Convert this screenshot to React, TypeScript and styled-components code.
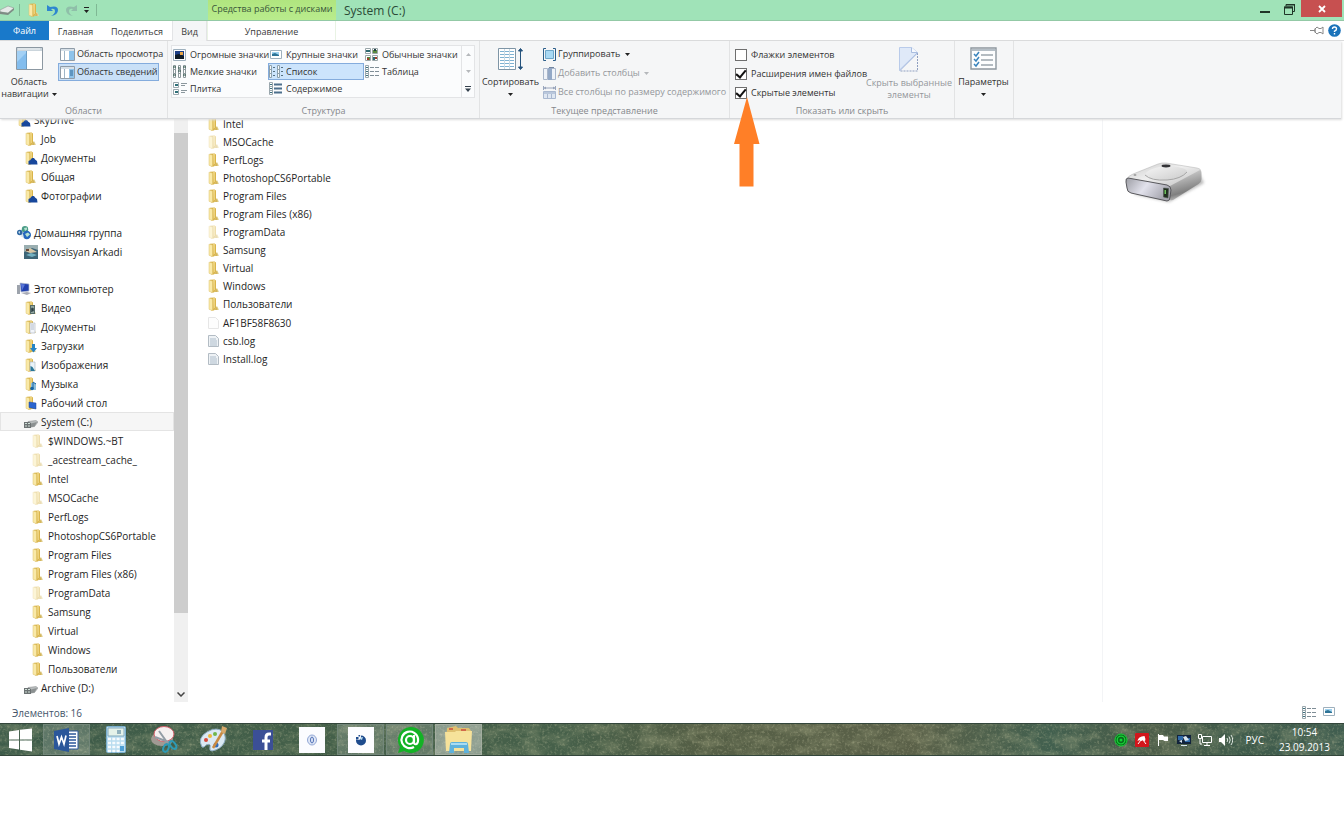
import { ReactNode, useState } from "react";
import styled, { createGlobalStyle, css } from "styled-components";

const GlobalStyle = createGlobalStyle`
  * {
    box-sizing: border-box;
  }
  body {
    margin: 0;
    background: #ffffff;
    color: #1e1e1e;
    font-family: "Open Sans", "Noto Sans", sans-serif;
    font-size: 10px;
    line-height: 12px;
  }
  button, input {
    font: inherit;
    color: inherit;
    margin: 0;
  }
  button {
    padding: 0;
    border: 0;
    background: none;
    white-space: nowrap;
  }
  svg {
    display: block;
    flex: none;
  }
`;

const Screen = styled.div`
  display: flex;
  flex-direction: column;
  height: calc(100vh - 83px);
  min-height: 400px;
`;

/* Title bar */

const TitleBar = styled.header`
  display: flex;
  height: 21px;
  background: #a0e3b8;
  border-bottom: 1px solid #93c9a6;
`;

const QuickAccess = styled.div`
  display: flex;
  align-items: center;
  width: 208px;
  height: 20px;
`;

const QuickButton = styled.button<{ $narrow?: boolean }>`
  display: flex;
  justify-content: center;
  width: ${({ $narrow }) => ($narrow ? "11px" : "19px")};
`;

const QuickLine = styled.span`
  width: 1px;
  height: 12px;
  margin: 0 4px;
  background: #7fb894;
`;

const ToolsLabel = styled.div`
  width: 128px;
  padding-top: 3px;
  background: linear-gradient(#b0e57f, #b9ec8d);
  color: #39573a;
  font-size: 9px;
  text-align: center;
  white-space: nowrap;
`;

const WindowTitle = styled.h1`
  flex: 1;
  margin: 0;
  padding-left: 8px;
  color: #2b4a37;
  font-size: 12px;
  font-weight: 400;
  line-height: 22px;
`;

const WindowButton = styled.button<{ $close?: boolean }>`
  display: flex;
  align-items: center;
  justify-content: center;
  width: ${({ $close }) => ($close ? "41px" : "24px")};
  height: ${({ $close }) => ($close ? "17px" : "18px")};
  margin-right: ${({ $close }) => ($close ? "2px" : "0")};
  background: ${({ $close }) => ($close ? "#c75050" : "transparent")};
`;

/* Tabs */

const TabRow = styled.nav`
  display: flex;
  height: 20px;
  border-bottom: 1px solid #dadbdc;
  font-size: 9px;
`;

const Tab = styled.button<{ $width: number; $kind?: "file" | "active" | "tools" }>`
  width: ${({ $width }) => $width}px;
  height: 19px;
  padding-top: 2px;
  color: #3b3b3b;
  ${({ $kind }) =>
    $kind === "file" &&
    css`
      padding: 0;
      background: #1979ca;
      color: #ffffff;
    `}
  ${({ $kind }) =>
    $kind === "active" &&
    css`
      height: 20px;
      background: #f5f6f7;
      border: 1px solid #e3e4e6;
      border-width: 0 1px;
    `}
  ${({ $kind }) =>
    $kind === "tools" &&
    css`
      border: 1px solid #e9f3e4;
      border-width: 0 1px;
    `}
`;

const TabTools = styled.div`
  display: flex;
  align-items: center;
  gap: 4px;
  margin-left: auto;
  padding-right: 3px;
`;

/* Ribbon */

const Ribbon = styled.section`
  position: relative;
  z-index: 1;
  display: flex;
  height: 78px;
  margin-right: 3px;
  background: #f5f6f7;
  border-bottom: 1px solid #d5d7da;
  box-shadow: 1px 1px 2px #dddddd;
  color: #444444;
  font-size: 9px;
`;

const Group = styled.div<{ $width: number }>`
  position: relative;
  display: flex;
  flex-direction: column;
  width: ${({ $width }) => $width}px;
  border-right: 1px solid #e2e3e4;
`;

const GroupBody = styled.div`
  display: flex;
  height: 64px;
  padding-top: 4px;
`;

const GroupName = styled.div`
  color: #85888c;
  text-align: center;
`;

const BigButton = styled.button<{ $width: number; $muted?: boolean }>`
  display: flex;
  flex-direction: column;
  flex: none;
  align-items: center;
  gap: 5px;
  width: ${({ $width }) => $width}px;
  height: 60px;
  padding-top: 2px;
  color: ${({ $muted }) => ($muted ? "#94979b" : "#333333")};
`;

const Stack = styled.div<{ $gap: number }>`
  display: flex;
  flex-direction: column;
  align-items: flex-start;
  gap: ${({ $gap }) => $gap}px;
`;

const SmallButton = styled.button<{ $on?: boolean; $muted?: boolean }>`
  display: flex;
  align-items: center;
  gap: 2px;
  height: 18px;
  padding-left: 1px;
  border: 1px solid ${({ $on }) => ($on ? "#84acdd" : "transparent")};
  background: ${({ $on }) => ($on ? "#c9e0f7" : "transparent")};
  color: ${({ $muted }) => ($muted ? "#94979b" : "#333333")};
`;

const Gallery = styled.div`
  display: grid;
  grid-template-columns: 96px 96px 97px 13px;
  height: 53px;
  margin-left: 3px;
  border: 1px solid #e3e4e6;
  background: #fbfcfd;
`;

const GalleryColumn = styled.div`
  display: flex;
  flex-direction: column;
`;

const ViewButton = styled.button<{ $on?: boolean }>`
  display: flex;
  align-items: center;
  gap: 3px;
  height: 17px;
  border: 1px solid ${({ $on }) => ($on ? "#84acdd" : "transparent")};
  background: ${({ $on }) => ($on ? "#cce4fc" : "transparent")};
  color: #333333;
`;

const GalleryScroll = styled.div`
  display: flex;
  flex-direction: column;
  border-left: 1px solid #e3e4e6;
`;

const ScrollStep = styled.button`
  display: flex;
  align-items: center;
  justify-content: center;
  height: 17px;
`;

const CheckList = styled.div`
  width: 134px;
  padding-left: 5px;
`;

const CheckRow = styled.label`
  display: flex;
  align-items: center;
  gap: 4px;
  height: 19px;
  color: #333333;
  white-space: nowrap;
`;

const CheckBox = styled.input`
  display: grid;
  flex: none;
  place-items: center;
  appearance: none;
  width: 12px;
  height: 12px;
  border: 1px solid #6f6f6f;
  background: #ffffff;

  &:checked::after {
    content: "";
    width: 4px;
    height: 8px;
    border: solid #111111;
    border-width: 0 2px 2px 0;
    transform: translateY(-1px) rotate(40deg);
  }
`;

const Pointer = styled.svg`
  position: absolute;
  top: 56px;
  left: 4px;
`;

/* Content */

const Content = styled.main`
  display: flex;
  flex: 1;
  min-height: 0;
  overflow: hidden;
`;

const Sidebar = styled.nav`
  width: 174px;
  overflow: hidden;
`;

const Tree = styled.ul`
  margin: -9px 0 0;
  padding: 0;
  list-style: none;
`;

const TreeItem = styled.li<{ $level: number; $active?: boolean }>`
  display: flex;
  align-items: center;
  gap: 3px;
  height: 19px;
  padding-left: ${({ $level }) => 16 + $level * 7}px;
  border: 1px solid ${({ $active }) => ($active ? "#e4e4e4" : "transparent")};
  background: ${({ $active }) => ($active ? "#f6f6f6" : "transparent")};
  white-space: nowrap;
`;

const TreeGap = styled.li`
  height: 18px;
`;

const ScrollTrack = styled.div`
  display: flex;
  flex-direction: column;
  width: 14px;
  padding-top: 14px;
  background: #f0f0f0;
`;

const ScrollThumb = styled.div`
  flex: 480;
  background: #cdcdcd;
`;

const ScrollRest = styled.div`
  flex: 74;
`;

const ScrollDown = styled.button`
  display: flex;
  align-items: center;
  justify-content: center;
  height: 15px;
`;

const Files = styled.div`
  flex: 1;
  padding-left: 19px;
`;

const FileList = styled.ul<{ $top: number }>`
  margin: ${({ $top }) => $top}px 0 0;
  padding: 0;
  list-style: none;
`;

const FileItem = styled.li`
  display: flex;
  align-items: center;
  gap: 2px;
  height: 18px;
`;

const Preview = styled.aside`
  width: 242px;
  padding: 42px 22px;
  border-left: 1px solid #f3f4f6;
`;

const StatusBar = styled.footer`
  display: flex;
  align-items: center;
  height: 21px;
  padding: 0 8px 0 12px;
  color: #44546a;
`;

const StatusViews = styled.div`
  display: flex;
  gap: 6px;
  margin-left: auto;
`;

/* Taskbar */

const Taskbar = styled.footer`
  position: relative;
  display: flex;
  height: 33px;
  overflow: hidden;
  border-top: 1px solid #33463b;
  border-bottom: 1px solid #33463b;
  background: linear-gradient(90deg, #3c5a49, #435f49 20%, #46604a 42%, #555f46 52%, #5b6149 68%, #42604f 78%, #4b5c48 86%, #3f5b4b 92%, #415e50);
  color: #ffffff;
`;

const Grain = styled.svg`
  position: absolute;
  inset: 0;
  width: 100%;
  height: 100%;
`;

const Apps = styled.div`
  position: relative;
  display: flex;
  gap: 2px;
`;

const AppButton = styled.button<{ $open?: boolean; $front?: boolean }>`
  display: flex;
  align-items: center;
  justify-content: center;
  width: 47px;
  border: 1px solid
    ${({ $open, $front }) => ($front ? "#a3ada0" : $open ? "#73877a" : "transparent")};
  background: ${({ $open, $front }) =>
    $front ? "rgba(255,255,255,0.38)" : $open ? "rgba(255,255,255,0.17)" : "transparent"};
`;

const StartButton = styled(AppButton)`
  width: 41px;
`;

const Tray = styled.div`
  position: relative;
  display: flex;
  align-items: center;
  gap: 7px;
  margin-left: auto;
  padding-right: 14px;
`;

const Language = styled.span`
  margin: 0 8px 0 6px;
`;

const Clock = styled.time`
  line-height: 15px;
  text-align: center;
`;

/* Icons */

const Caret = ({ color = "#222222" }: { color?: string }) => (
  <svg width="5" height="3" viewBox="0 0 5 3">
    <path d="M0 0h5L2.500 3z" fill={color} />
  </svg>
);

const InlineCaret = styled(Caret)``;

const CaretLine = styled.span`
  display: flex;
  align-items: center;
  gap: 3px;
`;

interface IFolderIcon {
  faded?: boolean;
  children?: ReactNode;
}

const FolderIcon = ({ faded, children }: IFolderIcon) => (
  <svg width="14" height="14" viewBox="0 0 14 14">
    <g opacity={faded ? 0.45 : 1}>
      <path d="M7 9l3.500.5 1.500 3.500H6z" fill="#e6d9a6" />
      <path d="M3 .8L7.500.5 9 1.500v9.500L7 13.500H4z" fill="#d9b44a" />
      <path d="M6 1l2-.2v9.500L6.500 12z" fill="#edd27c" />
      <path d="M2 1.200l3.500.8v11.500L2 12.300z" fill="#f9e9a8" stroke="#dcc06a" strokeWidth=".5" />
      <path d="M9 10l1.500.8V13H8z" fill="#d4b65c" />
    </g>
    {children}
  </svg>
);

const Cloud = () => (
  <path d="M4.500 13.500V10l2-1C7.500 6.500 10.500 6.500 11 8.600l2 1.400.5 3.500z" fill="#17479c" />
);

const treeBadges: Record<string, ReactNode> = {
  cloud: <Cloud />,
  video: (
    <g>
      <path d="M6 4h5v9H6z" fill="#566b68" />
      <path d="M7 5h3v2H7zM7 9h3v3H7z" fill="#91a6a0" />
      <path d="M8 6l2 4-3 1z" fill="#2c3e45" />
    </g>
  ),
  doc: (
    <g>
      <path d="M6 3h5v10H6z" fill="#f2f5fa" stroke="#a9afb8" strokeWidth=".6" />
      <path d="M7 5h3M7 7h3M7 9h3" stroke="#8b99b0" strokeWidth=".6" />
    </g>
  ),
  down: <path d="M8 5h3v4h2l-3.500 4.500L6 9h2z" fill="#2583c5" />,
  image: (
    <g>
      <path d="M6 4h5v9H6z" fill="#e9f3f8" stroke="#a6b4bd" strokeWidth=".6" />
      <path d="M6.500 8l2 1 2.500 4h-4.500z" fill="#2b7898" />
    </g>
  ),
  music: (
    <g>
      <path d="M7 6h5v7H7z" fill="#8dbfdc" />
      <path d="M9 12V5l3 2" fill="none" stroke="#1665a5" />
      <circle cx="8" cy="11.500" r="1.800" fill="#1665a5" />
    </g>
  ),
  desktop: <path d="M5 6l7 1v6l-7-1.500z" fill="#2b65cf" stroke="#1947a0" strokeWidth=".5" />,
};

const DriveIcon = () => (
  <svg width="14" height="14" viewBox="0 0 14 14">
    <path d="M4 6.500l8-1 2 1.500-3.500 4.500-6.500 1z" fill="#b9bdbe" stroke="#85898a" strokeWidth=".5" />
    <path d="M5 9l8-2-2.500 4.500L5 12.500z" fill="#8b9091" />
    <path d="M0 7h5l2 1v5H0z" fill="#6c7273" />
    <path d="M1 8h2v1H1zM4 8h2v1H4zM1 10.500h2v1H1zM4 10.500h2v1H4z" fill="#cfe0d8" />
  </svg>
);

const HomeGroupIcon = () => (
  <svg width="14" height="14" viewBox="0 0 14 14">
    <circle cx="2.800" cy="6.500" r="2.800" fill="#2e67a3" />
    <circle cx="8" cy="3.300" r="3.200" fill="#4a9c86" />
    <circle cx="9.800" cy="9" r="4.200" fill="#2568bd" />
    <path d="M7 2l3-.5v2L8 5zM8 8l3-1.500 2 2-3 2.500z" fill="#b6e2d1" />
    <path d="M1 6l2-1v3z" fill="#bcd6e8" />
    <path d="M3 10l3-2 1 4z" fill="#d9e6ee" />
  </svg>
);

const ComputerIcon = () => (
  <svg width="14" height="14" viewBox="0 0 14 14">
    <path d="M0 3h3v9H0z" fill="#9da3ac" />
    <path d="M3 1l9 1v7l-8 1z" fill="#2140ae" stroke="#b6bed0" strokeWidth=".7" />
    <path d="M4 2l4 .5-3 6z" fill="#5a77da" />
    <path d="M4 11l6-1 4 1-4 2z" fill="#a8abb6" />
  </svg>
);

const UserIcon = () => (
  <svg width="14" height="14" viewBox="0 0 14 14">
    <path d="M0 0h14v14H0z" fill="#3d6577" />
    <path d="M0 0h14v5L8 3 0 7z" fill="#9aaeb0" />
    <path d="M1 6l5-3 7 4-7 1z" fill="#d8c7a6" />
    <path d="M2 10l5-2 6 2-5 2z" fill="#72b0c0" />
    <path d="M2 4h3v2H2z" fill="#6a4c3b" />
  </svg>
);

const PageIcon = ({ lined }: { lined?: boolean }) => (
  <svg width="14" height="14" viewBox="0 0 14 14">
    <path
      d="M1.500 1.500h7l3 3v8h-10z"
      fill={lined ? "#eef2f5" : "#fdfdfd"}
      stroke={lined ? "#b3bcc4" : "#e6e6e6"}
    />
    {lined && <path d="M3 5h6M3 7h7M3 9h7M3 11h7" stroke="#9fb1c2" strokeWidth=".8" />}
  </svg>
);

const WindowIcon = ({ side }: { side: "right" | "detail" }) => (
  <svg width="15" height="13" viewBox="0 0 15 13">
    <path d="M.5.5h14v12H.5z" fill="#ffffff" stroke="#8f9ca8" />
    <path d="M1 1h13v2H1z" fill="#d6e0e8" />
    <path d="M4.500 3v9" stroke="#9fb6c8" />
    <path d="M9 3h5v9H9z" fill="#8fc3ea" />
    {side === "detail" && <path d="M10 5h3M10 7h3M10 9h3" stroke="#2d6796" />}
  </svg>
);

const NavPaneIcon = () => (
  <svg width="27" height="24" viewBox="0 0 27 24">
    <path d="M.5.5h26v22H.5z" fill="#ffffff" stroke="#8c98a2" />
    <path d="M1 1h25v3H1z" fill="#cbd5dc" />
    <path d="M2 2h22" stroke="#f2f6f8" />
    <path d="M1 4h9v18H1z" fill="#a2d0f5" />
    <path d="M1 15l9-9v16H1z" fill="#83bdee" />
    <path d="M10.500 4v18" stroke="#6d9dc3" />
  </svg>
);

const PictureIcon = ({ dark }: { dark?: boolean }) => (
  <svg width="14" height="12" viewBox="0 0 14 12">
    <path d={dark ? "M.5.5h12v11H.5z" : "M1.500 1.500h11v8h-11z"} fill="#ffffff" stroke="#9eb0bd" />
    <path d={dark ? "M2 2h9v6H2z" : "M3 3h7v4H3z"} fill={dark ? "#1d3f86" : "#9fd2ef"} />
    <path d={dark ? "M2 6l4-1 5 2v3H2z" : "M3 5l3-1 4 2v1H3z"} fill={dark ? "#101c26" : "#2d7396"} />
    {dark && <path d="M7 3h3v3H7z" fill="#e8a545" />}
  </svg>
);

const TilesIcon = () => (
  <svg width="14" height="13" viewBox="0 0 14 13">
    <path d="M.5.5h5v5h-5zM7.500.5h5v5h-5zM.5 7.500h5v5h-5zM7.500 7.500h5v5h-5z" fill="#ffffff" stroke="#9aa6a9" />
    <path d="M1 2h4v2H1zM8 9h2v3H8z" fill="#2f6a70" />
    <path d="M8 2h4v3H8zM2 9h3v3H2z" fill="#5b8a3f" />
    <path d="M2 10h2v2H2zM10 9h2v2h-2z" fill="#a33c2c" />
    <path d="M9 1h2v2H9z" fill="#1f3f45" />
  </svg>
);

const GridIcon = () => (
  <svg width="14" height="13" viewBox="0 0 14 13">
    {[0, 5, 10].map((x) => (
      <g key={x} stroke="#8c989c" fill="#ffffff">
        <path d={`M${x + 0.5} .5h2v12h-2zM${x + 0.5} 4.500h2M${x + 0.5} 8.500h2`} />
      </g>
    ))}
    <path d="M0 2h3M5 6h3M10 2h3M0 10h3M10 10h3M5 3h2" stroke="#2d5548" />
  </svg>
);

const ListIcon = () => (
  <svg width="14" height="13" viewBox="0 0 14 13">
    {[0, 8].map((x) => (
      <g key={x}>
        <path
          d={`M${x + 0.5} .5h2v12h-2zM${x + 0.5} 4.500h2M${x + 0.5} 8.500h2`}
          fill="#f6f9fb"
          stroke="#8ea1ad"
        />
        <path d={`M${x + 4} 2.500h2M${x + 4} 6.500h2M${x + 4} 10.500h2`} stroke="#56707f" />
      </g>
    ))}
  </svg>
);

const LinesIcon = ({ columns, bold }: { columns: number[]; bold?: boolean }) => (
  <svg width="14" height="13" viewBox="0 0 14 13">
    <path d="M.5.5h3v12h-3zM.5 4.500h3M.5 8.500h3" fill="#ffffff" stroke="#9aa7ad" />
    <path d="M1 2.500h2M1 6.500h2M1 10.500h2" stroke="#3b6f7c" />
    {columns.map((x) => (
      <path
        key={x}
        d={`M${x} 2.500h4M${x} 6.500h4M${x} 10.500h4`}
        stroke={bold ? "#4d6f8c" : "#7f8d96"}
        strokeWidth={bold ? 2 : 1}
      />
    ))}
  </svg>
);

const TileViewIcon = () => (
  <svg width="14" height="13" viewBox="0 0 14 13">
    <path d="M.5.5h5v5h-5zM.5 7.500h5v5h-5z" fill="#ffffff" stroke="#9aa7ad" />
    <path d="M2 3h3M2 10h3" stroke="#2f7079" strokeWidth="2" />
    <path d="M8 1.500h6M8 3.500h4M8 8.500h6M8 10.500h4" stroke="#8b979d" />
  </svg>
);

const SortIcon = () => (
  <svg width="26" height="24" viewBox="0 0 26 24">
    <path d="M.5 1.500h17v21H.5z" fill="#ffffff" stroke="#7e95a6" />
    <path d="M2 4.500h14M2 7.500h14M2 10.500h14M2 13.500h14M2 16.500h14M2 19.500h14" stroke="#7fb2d2" strokeDasharray="4 1" />
    <path d="M6.500 2v20M11.500 2v20" stroke="#c9dae5" />
    <path d="M22.500 3v18M20.500 4L22.500 1.500 24.500 4zM20.500 20l2 2.500 2-2.500z" stroke="#24527c" fill="#24527c" />
  </svg>
);

const GroupByIcon = () => (
  <svg width="13" height="13" viewBox="0 0 13 13">
    <path d="M3 .5H.5v12H3M10 .5h2.500v12H10" fill="none" stroke="#2d5f8b" />
    <path d="M2.500 2.500h8v8h-8z" fill="#a9d9f4" stroke="#6fa6c8" />
  </svg>
);

const AddColumnIcon = () => (
  <svg width="13" height="13" viewBox="0 0 13 13">
    <path d="M.5 1.500h4v11h-4zM8.500 1.500h4v11h-4z" fill="#eef2f8" stroke="#a9b6ca" />
    <path d="M5 1h4v12H5z" fill="#93a8c6" />
    <path d="M6 .5h5" stroke="#74869f" />
  </svg>
);

const FitColumnsIcon = () => (
  <svg width="13" height="13" viewBox="0 0 13 13">
    <path d="M.5 0v4M12.500 0v4M1 2h11M3 1L1.500 2 3 3M10 1l1.500 1L10 3" fill="none" stroke="#8090ac" strokeWidth=".8" />
    <path d="M.5 5.500h12v7H.5zM4.500 5v8M8.500 5v8" fill="#dfe7f2" stroke="#a9b8d0" />
    <path d="M1 6h11v2H1z" fill="#b9c7dc" />
  </svg>
);

const HideIcon = () => (
  <svg width="20" height="25" viewBox="0 0 20 25">
    <path d="M.5.500h12l6 5L.5 23z" fill="#dfe9f8" stroke="#b9cbea" />
    <path d="M12.500.5v5h6" fill="#f6f9fe" stroke="#a9bddf" />
    <path d="M18.500 6v18H1" fill="none" stroke="#8f9fc0" strokeDasharray="2 1" />
    <path d="M.5 24L18.500 6" stroke="#9fb4dc" />
  </svg>
);

const OptionsIcon = () => (
  <svg width="27" height="24" viewBox="0 0 27 24">
    <path d="M1 1h25v21H1z" fill="#fcfdfe" stroke="#8d979f" strokeWidth="1.400" />
    <path d="M2 2h23v2H2z" fill="#b5bfc7" />
    <path d="M11 8h12M11 13h12M11 18h12" stroke="#9aa5ad" strokeWidth="1.300" />
    <path d="M4 7l2 2 3-4M4 12l2 2 3-4M4 17l2 2 3-4" fill="none" stroke="#3984bd" strokeWidth="1.500" />
  </svg>
);

const DriveLarge = () => (
  <svg width="84" height="44" viewBox="0 0 84 44" role="img" aria-label="System (C:)">
    <defs>
      <linearGradient id="driveTop" x1="0" y1="0" x2="1" y2="1">
        <stop offset="0" stopColor="#c9c9c9" />
        <stop offset=".45" stopColor="#efefef" />
        <stop offset="1" stopColor="#b9b9b9" />
      </linearGradient>
      <linearGradient id="driveDish" x1="0" y1="0" x2="1" y2="1">
        <stop offset="0" stopColor="#f6f6f6" />
        <stop offset="1" stopColor="#cbcbcb" />
      </linearGradient>
      <linearGradient id="driveSide" x1="0" y1="0" x2=".3" y2="1">
        <stop offset="0" stopColor="#e6e6e6" />
        <stop offset=".5" stopColor="#a5a5a5" />
        <stop offset=".8" stopColor="#7f7f7f" />
        <stop offset="1" stopColor="#c4c4c4" />
      </linearGradient>
      <linearGradient id="driveFront" x1="0" y1="0" x2="1" y2=".4">
        <stop offset="0" stopColor="#9c9da4" />
        <stop offset=".5" stopColor="#e2e2ec" />
        <stop offset="1" stopColor="#a6a6af" />
      </linearGradient>
      <filter id="driveShadow">
        <feGaussianBlur stdDeviation="1.500" />
      </filter>
    </defs>
    <path d="M8 33l36 8 35-19-4-8z" fill="#8c8c8c" opacity=".6" filter="url(#driveShadow)" />
    <path d="M2 18Q3 15 8 13L33 3q4-1.500 8-1l31 5q5 1 3 4L47 27z" fill="url(#driveTop)" stroke="#b0b0b0" strokeWidth=".5" />
    <path d="M20 14q2-7 22-9 20 1 20 6-6 8-22 8-15 0-20-5z" fill="url(#driveDish)" />
    <path d="M20 14q6 6 22 5 14-1 20-8" fill="none" stroke="#a6a6a6" />
    <path d="M45 25L75 9q2 1 1.500 4v5q0 3-3 5L48 39q-4 1-4-4z" fill="url(#driveSide)" />
    <path d="M3 17q-2.500 0-2 4l1 6q0 4 4 5l36 8q3 0 3-4l1-7q0-4-4-5z" fill="url(#driveFront)" stroke="#58585c" />
    <ellipse cx="41" cy="5" rx="4.500" ry="1.400" fill="#333336" />
    <ellipse cx="10" cy="14" rx="1.500" ry=".7" fill="#8a8a8a" />
    <path d="M38.500 27l5 .5-.5 9.500-4.500-1z" fill="#20301f" stroke="#4d544d" strokeWidth=".6" />
    <path d="M39.500 29h1.500v4h-1.500z" fill="#6bbf5c" />
  </svg>
);

/* Data */

interface ITreeRow {
  name: string;
  level: number;
  icon: string;
  active?: boolean;
}

const treeRows: (ITreeRow | null)[] = [
  { name: "SkyDrive", level: 0, icon: "cloud" },
  { name: "Job", level: 1, icon: "folder" },
  { name: "Документы", level: 1, icon: "cloud" },
  { name: "Общая", level: 1, icon: "folder" },
  { name: "Фотографии", level: 1, icon: "cloud" },
  null,
  { name: "Домашняя группа", level: 0, icon: "home" },
  { name: "Movsisyan Arkadi", level: 1, icon: "user" },
  null,
  { name: "Этот компьютер", level: 0, icon: "computer" },
  { name: "Видео", level: 1, icon: "video" },
  { name: "Документы", level: 1, icon: "doc" },
  { name: "Загрузки", level: 1, icon: "down" },
  { name: "Изображения", level: 1, icon: "image" },
  { name: "Музыка", level: 1, icon: "music" },
  { name: "Рабочий стол", level: 1, icon: "desktop" },
  { name: "System (C:)", level: 1, icon: "drive", active: true },
  { name: "$WINDOWS.~BT", level: 2, icon: "faded" },
  { name: "_acestream_cache_", level: 2, icon: "faded" },
  { name: "Intel", level: 2, icon: "folder" },
  { name: "MSOCache", level: 2, icon: "faded" },
  { name: "PerfLogs", level: 2, icon: "folder" },
  { name: "PhotoshopCS6Portable", level: 2, icon: "folder" },
  { name: "Program Files", level: 2, icon: "folder" },
  { name: "Program Files (x86)", level: 2, icon: "folder" },
  { name: "ProgramData", level: 2, icon: "faded" },
  { name: "Samsung", level: 2, icon: "folder" },
  { name: "Virtual", level: 2, icon: "folder" },
  { name: "Windows", level: 2, icon: "folder" },
  { name: "Пользователи", level: 2, icon: "folder" },
  { name: "Archive (D:)", level: 1, icon: "drive" },
  { name: "System data (E:)", level: 1, icon: "drive" },
];

const folders = [
  "Intel",
  "MSOCache",
  "PerfLogs",
  "PhotoshopCS6Portable",
  "Program Files",
  "Program Files (x86)",
  "ProgramData",
  "Samsung",
  "Virtual",
  "Windows",
  "Пользователи",
];

const files = ["AF1BF58F8630", "csb.log", "Install.log"];

const hiddenFolders = ["MSOCache", "ProgramData"];

const views = [
  [
    { name: "Огромные значки", icon: <PictureIcon dark /> },
    { name: "Мелкие значки", icon: <GridIcon /> },
    { name: "Плитка", icon: <TileViewIcon /> },
  ],
  [
    { name: "Крупные значки", icon: <PictureIcon /> },
    { name: "Список", icon: <ListIcon /> },
    { name: "Содержимое", icon: <LinesIcon columns={[5, 9]} bold /> },
  ],
  [
    { name: "Обычные значки", icon: <TilesIcon /> },
    { name: "Таблица", icon: <LinesIcon columns={[5, 10]} /> },
  ],
];

const TreeIcon = ({ icon }: { icon: string }) => {
  if (icon === "home") return <HomeGroupIcon />;
  if (icon === "user") return <UserIcon />;
  if (icon === "computer") return <ComputerIcon />;
  if (icon === "drive") return <DriveIcon />;
  return <FolderIcon faded={icon === "faded"}>{treeBadges[icon]}</FolderIcon>;
};

const Title = () => (
  <TitleBar>
    <QuickAccess>
      <svg width="15" height="12" viewBox="0 0 15 12">
        <path d="M0 6l8-4 6 2-6 5-8-1z" fill="#e6e9e8" stroke="#8d9a93" strokeWidth=".6" />
        <path d="M0 7.500l8 1.500 6-5v2l-6 5-8-1z" fill="#7f8c85" />
      </svg>
      <QuickLine />
      <QuickButton aria-label="Свойства">
        <FolderIcon />
      </QuickButton>
      <QuickButton aria-label="Отменить">
        <svg width="13" height="13" viewBox="0 0 13 13">
          <path d="M1 1v6h6L5 5q4-1 4 2t-4 5q7-1 7-6T4 3z" fill="#2e86cf" />
        </svg>
      </QuickButton>
      <QuickButton aria-label="Вернуть">
        <svg width="13" height="13" viewBox="0 0 13 13">
          <path d="M12 1v6H6l2-2Q4 4 4 7t4 5Q1 11 1 6t8-3z" fill="#8fbfa9" />
        </svg>
      </QuickButton>
      <QuickButton $narrow aria-label="Настройка панели">
        <svg width="5" height="6" viewBox="0 0 5 6">
          <path d="M0 0h5v1H0zM0 3h5L2.500 6z" fill="#222222" />
        </svg>
      </QuickButton>
      <QuickLine />
    </QuickAccess>
    <ToolsLabel>Средства работы с дисками</ToolsLabel>
    <WindowTitle>System (C:)</WindowTitle>
    <WindowButton aria-label="Свернуть">
      <svg width="10" height="10" viewBox="0 0 10 10">
        <path d="M0 7h10v2H0z" fill="#1f3527" />
      </svg>
    </WindowButton>
    <WindowButton aria-label="Развернуть">
      <svg width="11" height="11" viewBox="0 0 11 11">
        <path d="M2 2V.5h8.500v7H9M.5 3h8v7.500h-8z" fill="none" stroke="#1f3527" />
        <path d="M0 2.500h9v2H0zM2 0h9v1.500H2z" fill="#1f3527" />
      </svg>
    </WindowButton>
    <WindowButton $close aria-label="Закрыть">
      <svg width="8" height="8" viewBox="0 0 8 8">
        <path d="M1 1l6 6M7 1L1 7" stroke="#ffffff" strokeWidth="1.800" />
      </svg>
    </WindowButton>
  </TitleBar>
);

const Tabs = () => (
  <TabRow>
    <Tab $width={49} $kind="file">Файл</Tab>
    <Tab $width={53}>Главная</Tab>
    <Tab $width={70}>Поделиться</Tab>
    <Tab $width={35} $kind="active">Вид</Tab>
    <Tab $width={129} $kind="tools">Управление</Tab>
    <TabTools>
      <svg width="14" height="9" viewBox="0 0 14 9">
        <path d="M0 4.500h5M5 2.500v4M5 3l2-2 2 1.500h2L13 1v7l-2-1.500H9L7 8 5 6z" fill="#ffffff" stroke="#888888" />
      </svg>
      <svg width="13" height="13" viewBox="0 0 13 13">
        <circle cx="6.500" cy="6.500" r="6.300" fill="#1b73ba" />
        <path d="M4.500 5q0-2 2-2t2 1.800T6.500 7.200V8M6.500 9v1.400" fill="none" stroke="#ffffff" strokeWidth="1.400" />
      </svg>
    </TabTools>
  </TabRow>
);

const RibbonPanel = () => {
  const [view, setView] = useState("Список");

  return (
    <Ribbon>
      <Group $width={168}>
        <GroupBody>
          <BigButton $width={58}>
            <NavPaneIcon />
            <span>
              Область
              <CaretLine>
                навигации
                <InlineCaret />
              </CaretLine>
            </span>
          </BigButton>
          <Stack $gap={0}>
            <SmallButton>
              <WindowIcon side="right" />
              Область просмотра
            </SmallButton>
            <SmallButton $on>
              <WindowIcon side="detail" />
              Область сведений
            </SmallButton>
          </Stack>
        </GroupBody>
        <GroupName>Области</GroupName>
      </Group>
      <Group $width={312}>
        <GroupBody>
          <Gallery>
            {views.map((column, i) => (
              <GalleryColumn key={i}>
                {column.map((item) => (
                  <ViewButton
                    key={item.name}
                    $on={view === item.name}
                    onClick={() => setView(item.name)}
                  >
                    {item.icon}
                    {item.name}
                  </ViewButton>
                ))}
              </GalleryColumn>
            ))}
            <GalleryScroll>
              <ScrollStep aria-label="Вверх">
                <svg width="5" height="3" viewBox="0 0 5 3">
                  <path d="M0 3h5L2.500 0z" fill="#b5b8bb" />
                </svg>
              </ScrollStep>
              <ScrollStep aria-label="Вниз">
                <Caret color="#b5b8bb" />
              </ScrollStep>
              <ScrollStep aria-label="Ещё">
                <svg width="6" height="6" viewBox="0 0 6 6">
                  <path d="M0 0h6v1H0zM0 2.500h6L3 6z" fill="#34414d" />
                </svg>
              </ScrollStep>
            </GalleryScroll>
          </Gallery>
        </GroupBody>
        <GroupName>Структура</GroupName>
      </Group>
      <Group $width={250}>
        <GroupBody>
          <BigButton $width={61}>
            <SortIcon />
            Сортировать
            <Caret />
          </BigButton>
          <Stack $gap={1}>
            <SmallButton>
              <GroupByIcon />
              Группировать&nbsp;
              <Caret />
            </SmallButton>
            <SmallButton $muted>
              <AddColumnIcon />
              Добавить столбцы&nbsp;
              <Caret color="#b5b8bb" />
            </SmallButton>
            <SmallButton $muted>
              <FitColumnsIcon />
              Все столбцы по размеру содержимого
            </SmallButton>
          </Stack>
        </GroupBody>
        <GroupName>Текущее представление</GroupName>
      </Group>
      <Group $width={225}>
        <GroupBody>
          <CheckList>
            <CheckRow>
              <CheckBox type="checkbox" />
              Флажки элементов
            </CheckRow>
            <CheckRow>
              <CheckBox type="checkbox" defaultChecked />
              Расширения имен файлов
            </CheckRow>
            <CheckRow>
              <CheckBox type="checkbox" defaultChecked />
              Скрытые элементы
            </CheckRow>
          </CheckList>
          <BigButton $width={90} $muted>
            <HideIcon />
            <span>
              Скрыть выбранные
              <br />
              элементы
            </span>
          </BigButton>
        </GroupBody>
        <GroupName>Показать или скрыть</GroupName>
        <Pointer width="26" height="90" viewBox="0 0 26 90">
          <path d="M13 0l12.500 47H19.500v42.500h-14V47H0z" fill="#ff7f27" />
        </Pointer>
      </Group>
      <Group $width={59}>
        <GroupBody>
          <BigButton $width={57}>
            <OptionsIcon />
            Параметры
            <Caret />
          </BigButton>
        </GroupBody>
      </Group>
    </Ribbon>
  );
};

const TaskbarPanel = () => (
  <Taskbar>
    <Grain>
      <filter id="grass">
        <feTurbulence type="fractalNoise" baseFrequency=".05 .09" numOctaves="6" seed="8" />
        <feColorMatrix values="0 0 0 0 .47  0 0 0 0 .49  0 0 0 0 .29  1.400 0 0 0 -.55" />
      </filter>
      <filter id="specks">
        <feTurbulence type="fractalNoise" baseFrequency=".4" numOctaves="2" seed="3" />
        <feColorMatrix values="0 0 0 0 .55  0 0 0 0 .55  0 0 0 0 .35  2 0 0 0 -1" />
      </filter>
      <rect width="100%" height="100%" filter="url(#grass)" opacity=".5" />
      <rect width="100%" height="100%" filter="url(#specks)" opacity=".45" />
    </Grain>
    <Apps>
      <StartButton aria-label="Пуск">
        <svg width="24" height="24" viewBox="0 0 24 24">
          <path d="M0 3.500l10-1.500v9.500H0zM11 1.800L23 .5v11H11zM0 12.500h10v9L0 20zM11 12.500h12v11l-12-1.800z" fill="#ffffff" />
        </svg>
      </StartButton>
      <AppButton $open aria-label="Word">
        <svg width="26" height="24" viewBox="0 0 26 24">
          <path d="M13 3h11v18H13z" fill="#ffffff" stroke="#2b579a" />
          <path d="M15 6h7M15 9h7M15 12h7M15 15h7M15 18h7" stroke="#2b579a" strokeWidth="1.500" />
          <path d="M0 3l15-3v24L0 21z" fill="#2b579a" />
          <path d="M3 8l2 8 2.500-7L10 16l2-8.500" fill="none" stroke="#ffffff" strokeWidth="1.700" />
        </svg>
      </AppButton>
      <AppButton aria-label="Калькулятор">
        <svg width="20" height="27" viewBox="0 0 20 27">
          <rect x=".5" y=".5" width="19" height="26" rx="1" fill="#b9dcef" stroke="#7bb0cf" />
          <path d="M2 2h16v8H2z" fill="#e5f2e9" stroke="#83aabd" />
          <path d="M14 4v4M12 4v4" stroke="#3d7090" />
          <path d="M2 13h16M2 17h16M2 21h16M2 25h12" stroke="#f7fbfd" strokeWidth="2.500" strokeDasharray="3 1.300" />
          <path d="M14 20h4v5h-4z" fill="#4e9fd4" />
        </svg>
      </AppButton>
      <AppButton aria-label="Ножницы">
        <svg width="28" height="28" viewBox="0 0 28 28">
          <ellipse cx="11" cy="13" rx="11" ry="7" fill="#a19a93" />
          <ellipse cx="13" cy="8" rx="10" ry="7.500" fill="#f5f0f0" stroke="#d4606b" />
          <path d="M8 5l10 14M4 11l16 6" stroke="#929ca5" strokeWidth="2" />
          <ellipse cx="15" cy="22" rx="2.500" ry="4" transform="rotate(25 15 22)" fill="none" stroke="#2d9ab5" strokeWidth="2" />
          <ellipse cx="22" cy="19" rx="2.500" ry="4.500" transform="rotate(-35 22 19)" fill="none" stroke="#2d9ab5" strokeWidth="2" />
        </svg>
      </AppButton>
      <AppButton aria-label="Paint">
        <svg width="28" height="27" viewBox="0 0 28 27">
          <path d="M2 21Q-3 12 7 6t16 0q4 5 1 11T12 25q-3 0-2-4t-4-2q-2 3-4 2z" fill="#dbe9f3" stroke="#8eadc2" />
          <circle cx="6" cy="14" r="2" fill="#d64a3c" />
          <circle cx="10" cy="10" r="2" fill="#eeb83e" />
          <circle cx="15" cy="8" r="2" fill="#6fb64b" />
          <circle cx="16" cy="19" r="2.500" fill="#2f6cbb" />
          <path d="M23 5L13 22" stroke="#c98a43" strokeWidth="2.500" />
          <path d="M22 0l5 2-2 6-4-2z" fill="#d8a96b" />
        </svg>
      </AppButton>
      <AppButton aria-label="Facebook">
        <svg width="20" height="20" viewBox="0 0 20 20">
          <path d="M0 0h20v20H0z" fill="#3b4f96" />
          <path d="M13 20V7.500Q13 4 16 4h2M9 11h8" fill="none" stroke="#ffffff" strokeWidth="3" />
        </svg>
      </AppButton>
      <AppButton aria-label="Браузер">
        <svg width="26" height="26" viewBox="0 0 26 26">
          <path d="M0 0h26v26H0z" fill="#fbfcff" />
          <ellipse cx="13" cy="13" rx="4.500" ry="5" fill="#dfe7f7" stroke="#91a7d5" />
          <ellipse cx="13" cy="13" rx="1.500" ry="3" fill="none" stroke="#5373b8" />
        </svg>
      </AppButton>
      <AppButton $open aria-label="Почта">
        <svg width="26" height="26" viewBox="0 0 26 26">
          <path d="M0 0h26v26H0z" fill="#fdfdff" />
          <circle cx="13" cy="13.500" r="5" fill="#1e4b8d" />
          <circle cx="10" cy="10" r="3" fill="#fdfdff" />
          <path d="M12 12q0-2 3-2l-1 3z" fill="#b8dbef" />
          <path d="M8 10h2.500v2.500H8zM10.500 8H12v1.500h-1.500z" fill="#1e4b8d" />
        </svg>
      </AppButton>
      <AppButton $open aria-label="Агент">
        <svg width="28" height="28" viewBox="0 0 28 28">
          <path d="M14 1a13 13 0 1 1-6 24l-6 2 2-6A13 13 0 0 1 14 1z" fill="#13b225" />
          <circle cx="14" cy="14" r="4" fill="none" stroke="#ffffff" strokeWidth="2.200" />
          <path d="M18 9v7q0 3 2.500 2 2-1.500 1.500-5.500a8.300 8.300 0 1 0-4 8.500" fill="none" stroke="#ffffff" strokeWidth="2.200" />
        </svg>
      </AppButton>
      <AppButton $front aria-label="Проводник">
        <svg width="30" height="27" viewBox="0 0 30 27">
          <path d="M3 2l9-2 2 2h11l2 3v20H2z" fill="#dfc070" />
          <path d="M5 2h4v2H5zM17 3h5v2h-5z" fill="#d2694a" />
          <path d="M1 6h10l1-1h16l-1 20H2z" fill="#f6e29a" />
          <path d="M5 27l1-9q0-2 2-2h14q2 0 2 2l1 9h-5v-5H10v5z" fill="#5eb2dc" />
          <path d="M7 17h16v2H7z" fill="#a9dcf1" />
        </svg>
      </AppButton>
    </Apps>
    <Tray>
      <svg width="14" height="14" viewBox="0 0 14 14">
        <circle cx="7" cy="7" r="6" fill="#0b6a1c" stroke="#14d435" />
        <circle cx="7" cy="7" r="3.800" fill="none" stroke="#14d435" strokeWidth="1.300" />
        <circle cx="7" cy="7" r="1.500" fill="#14d435" />
      </svg>
      <svg width="14" height="14" viewBox="0 0 14 14">
        <rect width="14" height="14" rx="1" fill="#d2161c" />
        <path d="M2.500 8Q3 3.500 9.500 3q1.500 3 .5 5.500Q8 6.500 6.500 8 4.500 6.500 2.500 8z" fill="#ffffff" />
        <path d="M6 7l-3 4M8 7l3 4" fill="none" stroke="#ffffff" />
      </svg>
      <svg width="14" height="14" viewBox="0 0 14 14">
        <path d="M2.500 1v12" stroke="#ffffff" />
        <path d="M3 2h4l1 1.500h4V8L8.500 8 7 7H3z" fill="#ffffff" />
      </svg>
      <svg width="14" height="14" viewBox="0 0 14 14">
        <path d="M0 2h14v9H0z" fill="#12233c" />
        <path d="M1 3h5v4H1zM8 5h5v4H8z" fill="#2f6aa8" />
        <path d="M6 4l3-1 3 4-4 1zM2 8l3-1v3zM4 12h6v1H4z" fill="#d9e6ef" />
      </svg>
      <svg width="14" height="14" viewBox="0 0 14 14">
        <path d="M4.500 3.500h9v6h-9zM9 10v2M6 12.500h6M.5 1.500h3v4h-3zM2 6v5h2" fill="none" stroke="#ffffff" />
      </svg>
      <svg width="14" height="14" viewBox="0 0 14 14">
        <path d="M0 5h2l4-4v12L2 9H0z" fill="#ffffff" />
        <path d="M8 5q1.500 2 0 4M10 3.500q2.500 3.500 0 7M12 2q3.500 5 0 10" fill="none" stroke="#e1e8e3" />
      </svg>
      <Language>РУС</Language>
      <Clock>
        10:54
        <br />
        23.09.2013
      </Clock>
    </Tray>
  </Taskbar>
);

const App = () => (
  <>
    <GlobalStyle />
    <Screen>
      <Title />
      <Tabs />
      <RibbonPanel />
      <Content>
        <Sidebar>
          <Tree>
            {treeRows.map((row, i) =>
              row ? (
                <TreeItem key={i} $level={row.level} $active={row.active}>
                  <TreeIcon icon={row.icon} />
                  {row.name}
                </TreeItem>
              ) : (
                <TreeGap key={i} />
              )
            )}
          </Tree>
        </Sidebar>
        <ScrollTrack>
          <ScrollThumb />
          <ScrollRest />
          <ScrollDown aria-label="Прокрутить вниз">
            <svg width="8" height="5" viewBox="0 0 8 5">
              <path d="M.5.5L4 4 7.500.5" fill="none" stroke="#444444" strokeWidth="1.500" />
            </svg>
          </ScrollDown>
        </ScrollTrack>
        <Files>
          <FileList $top={-4}>
            {folders.map((name) => (
              <FileItem key={name}>
                <FolderIcon faded={hiddenFolders.includes(name)} />
                {name}
              </FileItem>
            ))}
          </FileList>
          <FileList $top={1}>
            {files.map((name) => (
              <FileItem key={name}>
                <PageIcon lined={name.endsWith(".log")} />
                {name}
              </FileItem>
            ))}
          </FileList>
        </Files>
        <Preview>
          <DriveLarge />
        </Preview>
      </Content>
      <StatusBar>
        Элементов: 16
        <StatusViews>
          <LinesIcon columns={[5, 10]} />
          <PictureIcon />
        </StatusViews>
      </StatusBar>
      <TaskbarPanel />
    </Screen>
  </>
);

export default App;
